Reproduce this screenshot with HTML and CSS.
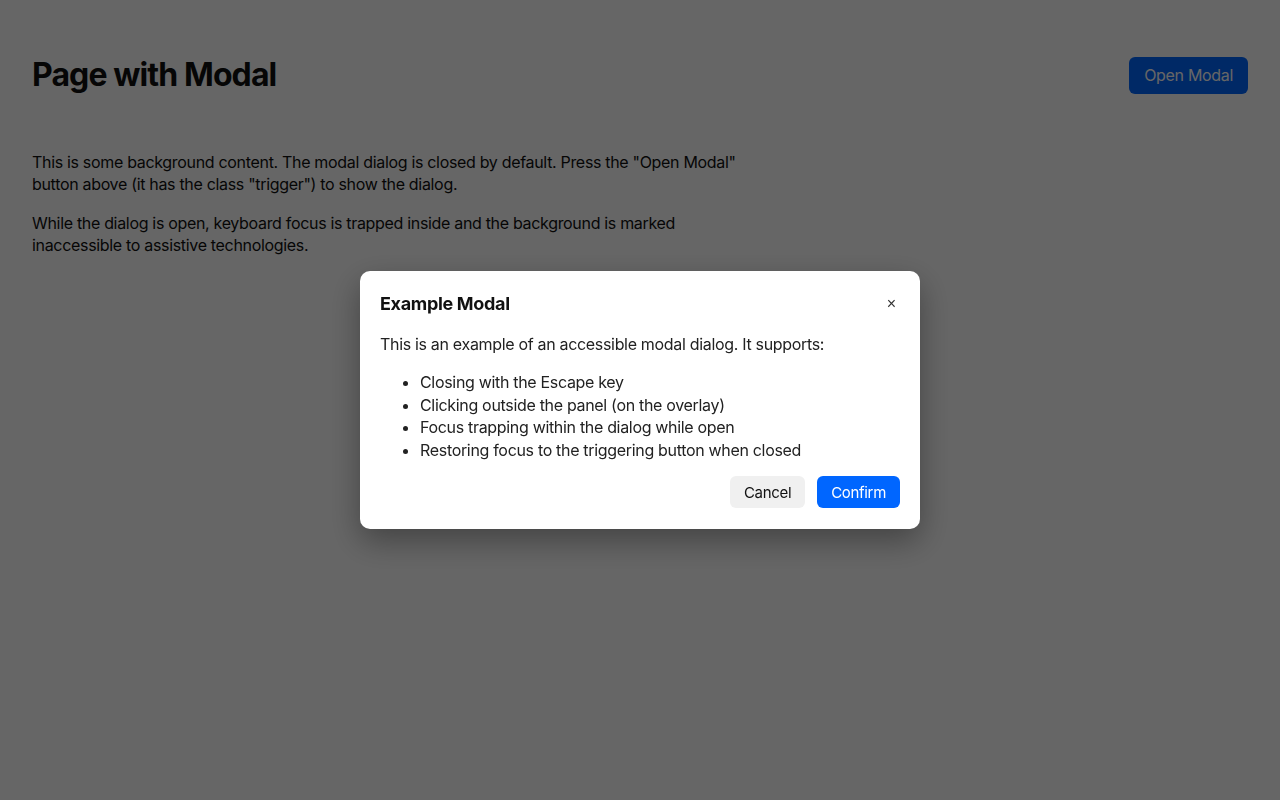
FILE: index.html
```html
<!DOCTYPE html>
<html lang="en">
<head>
    <meta charset="UTF-8">
    <meta name="viewport" content="width=device-width, initial-scale=1.0">
    <title>Page with Modal</title>
    <link rel="stylesheet" href="styles.css">
</head>
<body>

    <!-- Page Content -->
    <main class="page" aria-hidden="true">
        <header class="page-header">
            <h1>Page with Modal</h1>
            <button class="trigger" type="button">Open Modal</button>
        </header>
        <p>This is some background content. The modal dialog is closed by default. Press the "Open Modal" button above (it has the class "trigger") to show the dialog.</p>
        <p>While the dialog is open, keyboard focus is trapped inside and the background is marked inaccessible to assistive technologies.</p>
    </main>

    <!-- Overlay + Modal -->
    <div class="overlay">
        <div class="modal" role="dialog" aria-modal="true" aria-labelledby="modalTitle">
            <div class="modal-header">
                <h2 id="modalTitle">Example Modal</h2>
                <button class="close-btn" type="button" aria-label="Close">&times;</button>
            </div>
            <p>This is an example of an accessible modal dialog. It supports:</p>
            <ul>
                <li>Closing with the Escape key</li>
                <li>Clicking outside the panel (on the overlay)</li>
                <li>Focus trapping within the dialog while open</li>
                <li>Restoring focus to the triggering button when closed</li>
            </ul>
            <div class="modal-footer">
                <button class="btn btn-cancel" type="button">Cancel</button>
                <button class="btn btn-confirm" type="button">Confirm</button>
            </div>
        </div>
    </div>

</body>
</html>
```

FILE: styles.css
```css
body {
    margin: 0;
    padding: 0;
    font-family: Inter, "Noto Sans", Arial, sans-serif;
    letter-spacing: -0.02em;
    color: #111;
    background: #fff;
    height: 100vh;
    overflow: hidden;
}

/* Page Content */
.page {
    padding: 56px 32px 0;
}

.page-header {
    display: flex;
    justify-content: space-between;
    align-items: center;
    margin-bottom: 57px;
}

.page-header h1 {
    margin: 0;
    font-size: 32px;
    line-height: 38px;
    font-weight: 700;
    letter-spacing: -0.028em;
}

.trigger {
    background: #0066ff;
    color: #fff;
    border: none;
    border-radius: 6px;
    padding: 0 15px;
    height: 37px;
    font-family: inherit;
    font-size: 16px;
    letter-spacing: inherit;
}

.page p {
    max-width: 720px;
    margin: 0 0 16px;
    font-size: 16px;
    line-height: 22.4px;
}

/* Dark Overlay */
.overlay {
    position: fixed;
    top: 0;
    left: 0;
    width: 100%;
    height: 100%;
    background: rgba(0, 0, 0, 0.6);
    display: flex;
    justify-content: center;
    align-items: center;
}

/* Modal */
.modal {
    width: 560px;
    box-sizing: border-box;
    padding: 21px 20px;
    background: #fff;
    border-radius: 10px;
    box-shadow: 0 12px 32px rgba(0, 0, 0, 0.35);
    color: #222;
    font-size: 16px;
    line-height: 22.4px;
}

.modal-header {
    display: flex;
    justify-content: space-between;
    align-items: center;
    height: 24px;
    margin-bottom: 17px;
}

.modal-header h2 {
    margin: 0;
    font-size: 18px;
    font-weight: 700;
    color: #111;
}

.close-btn {
    background: none;
    border: none;
    padding: 0 4px;
    font-size: 16px;
    font-weight: 500;
    line-height: 1;
    color: #333;
    cursor: pointer;
}

.modal p {
    margin: 0;
}

.modal ul {
    margin: 16px 0 15px;
    padding-left: 40px;
}

.modal-footer {
    display: flex;
    justify-content: flex-end;
    gap: 12px;
}

.btn {
    border: none;
    border-radius: 6px;
    height: 32px;
    padding: 0 14px;
    font-family: inherit;
    font-size: 15px;
    letter-spacing: inherit;
    cursor: pointer;
}

.btn-cancel {
    background: #f0f0f0;
    color: #111;
}

.btn-confirm {
    background: #0066ff;
    color: #fff;
}
```
